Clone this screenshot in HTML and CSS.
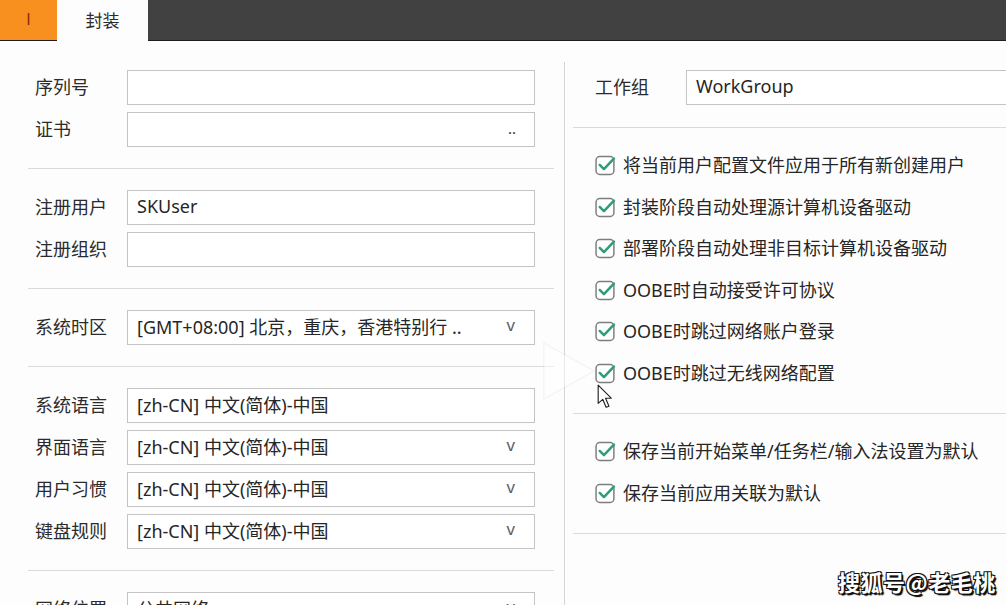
FILE: index.html
```html
<!DOCTYPE html>
<html lang="zh-CN">
<head>
<meta charset="utf-8">
<title>封装</title>
<link rel="stylesheet" href="styles.css">
</head>
<body>
<div class="topbar">
  <div class="tab tab-orange"><span class="tab-i">I</span></div>
  <div class="tab tab-active">封装</div>
</div>
<div class="main">
  <div class="col col-left">
    <div class="section first">
      <div class="row"><span class="label">序列号</span><div class="input"></div></div>
      <div class="row"><span class="label">证书</span><div class="input"><span class="fill"></span><span class="dots">..</span></div></div>
    </div>
    <div class="section">
      <div class="row"><span class="label">注册用户</span><div class="input">SKUser</div></div>
      <div class="row"><span class="label">注册组织</span><div class="input"></div></div>
    </div>
    <div class="section">
      <div class="row"><span class="label">系统时区</span><div class="input"><span class="fill">[GMT+08:00] 北京，重庆，香港特别行 ..</span><span class="arrow">v</span></div></div>
    </div>
    <div class="section">
      <div class="row"><span class="label">系统语言</span><div class="input">[zh-CN] 中文(简体)-中国</div></div>
      <div class="row"><span class="label">界面语言</span><div class="input"><span class="fill">[zh-CN] 中文(简体)-中国</span><span class="arrow">v</span></div></div>
      <div class="row"><span class="label">用户习惯</span><div class="input"><span class="fill">[zh-CN] 中文(简体)-中国</span><span class="arrow">v</span></div></div>
      <div class="row"><span class="label">键盘规则</span><div class="input"><span class="fill">[zh-CN] 中文(简体)-中国</span><span class="arrow">v</span></div></div>
    </div>
    <div class="section">
      <div class="row"><span class="label">网络位置</span><div class="input"><span class="fill">公共网络</span><span class="arrow">v</span></div></div>
    </div>
  </div>
  <div class="col col-right">
    <div class="section first">
      <div class="row"><span class="label label-r">工作组</span><div class="input input-wide">WorkGroup</div></div>
    </div>
    <div class="section checks">
      <div class="check"><svg class="cb" viewBox="0 0 20 20"><rect x="1" y="1.5" width="17" height="17" rx="3.5"/><path d="M4.5 9.5 L8.5 13.5 L18 3.5"/></svg><span>将当前用户配置文件应用于所有新创建用户</span></div>
      <div class="check"><svg class="cb" viewBox="0 0 20 20"><rect x="1" y="1.5" width="17" height="17" rx="3.5"/><path d="M4.5 9.5 L8.5 13.5 L18 3.5"/></svg><span>封装阶段自动处理源计算机设备驱动</span></div>
      <div class="check"><svg class="cb" viewBox="0 0 20 20"><rect x="1" y="1.5" width="17" height="17" rx="3.5"/><path d="M4.5 9.5 L8.5 13.5 L18 3.5"/></svg><span>部署阶段自动处理非目标计算机设备驱动</span></div>
      <div class="check"><svg class="cb" viewBox="0 0 20 20"><rect x="1" y="1.5" width="17" height="17" rx="3.5"/><path d="M4.5 9.5 L8.5 13.5 L18 3.5"/></svg><span>OOBE时自动接受许可协议</span></div>
      <div class="check"><svg class="cb" viewBox="0 0 20 20"><rect x="1" y="1.5" width="17" height="17" rx="3.5"/><path d="M4.5 9.5 L8.5 13.5 L18 3.5"/></svg><span>OOBE时跳过网络账户登录</span></div>
      <div class="check"><svg class="cb" viewBox="0 0 20 20"><rect x="1" y="1.5" width="17" height="17" rx="3.5"/><path d="M4.5 9.5 L8.5 13.5 L18 3.5"/></svg><span>OOBE时跳过无线网络配置</span></div>
    </div>
    <div class="section checks">
      <div class="check"><svg class="cb" viewBox="0 0 20 20"><rect x="1" y="1.5" width="17" height="17" rx="3.5"/><path d="M4.5 9.5 L8.5 13.5 L18 3.5"/></svg><span>保存当前开始菜单/任务栏/输入法设置为默认</span></div>
      <div class="check"><svg class="cb" viewBox="0 0 20 20"><rect x="1" y="1.5" width="17" height="17" rx="3.5"/><path d="M4.5 9.5 L8.5 13.5 L18 3.5"/></svg><span>保存当前应用关联为默认</span></div>
    </div>
  </div>
</div>
<svg class="play" viewBox="0 0 60 64"><polygon points="4,2 58,32 4,62"/></svg>
<svg class="cursor" viewBox="0 0 14 22"><path d="M1 1 L1 17 L5 13.5 L8 20.5 L10.5 19.5 L7.5 12.5 L12.5 12.5 Z"/></svg>
<div class="watermark">搜狐号@老毛桃</div>
</body>
</html>
```

FILE: styles.css
```css
html, body {
  margin: 0;
  padding: 0;
  width: 1006px;
  height: 605px;
  overflow: hidden;
  background: #fdfdfd;
  font-family: "Noto Sans", "Noto Sans CJK SC", sans-serif;
  font-size: 18px;
  color: #262626;
}

.topbar {
  display: flex;
  height: 40px;
  background: #414141;
  border-bottom: 1px solid #1e1e1e;
}

.tab {
  height: 40px;
  display: flex;
  align-items: center;
  justify-content: center;
}

.tab-orange {
  width: 57px;
  background: #f8901f;
}

.tab-i {
  color: #8e2e10;
  font-family: "Liberation Sans", sans-serif;
  font-size: 16px;
}

.tab-active {
  width: 91px;
  height: 41px;
  padding-bottom: 2px;
  box-sizing: border-box;
  background: #fdfdfd;
  font-family: "Noto Sans CJK SC", sans-serif;
  font-size: 17px;
  color: #2b2b2b;
  margin-bottom: -1px;
}

.main {
  display: flex;
  width: 1006px;
  overflow: hidden;
}

.col {
  margin-top: 21px;
}

.col-left {
  flex: none;
  width: 565px;
  box-sizing: border-box;
  padding: 0 10px 0 28px;
  border-right: 1px solid #d6d6d6;
}

.col-right {
  flex: 1;
  min-width: 0;
  padding-left: 8px;
  overflow: hidden;
}

.section {
  display: flex;
  flex-direction: column;
  gap: 7px;
  padding: 21px 0;
  border-bottom: 1px solid #dadada;
}

.section.first {
  padding-top: 8px;
}

.col-right .section.first {
  padding-bottom: 22px;
}

.row {
  display: flex;
  align-items: center;
  height: 35px;
  padding-left: 7px;
}

.label {
  width: 92px;
  flex: none;
  padding-bottom: 3px;
  font-family: "Noto Sans CJK SC", sans-serif;
  color: #2b2b2b;
}

.label-r {
  width: 91px;
  padding-left: 15px;
}

.input {
  width: 408px;
  height: 35px;
  box-sizing: border-box;
  border: 1px solid #c4c4c4;
  background: #fff;
  display: flex;
  align-items: center;
  padding: 0 18px 3px 9px;
  white-space: nowrap;
  color: #262626;
  flex: none;
}

.input-wide {
  width: 420px;
}

.fill {
  flex: 1;
}

.dots {
  font-size: 15px;
  color: #333;
  margin-right: 0;
}

.arrow {
  font-family: "Liberation Sans", sans-serif;
  font-size: 17px;
  color: #5e5e5e;
  margin-right: 1px;
}

.checks {
  gap: 0;
  padding: 17px 0 19px;
}

.check {
  display: flex;
  align-items: center;
  height: 41.5px;
  padding-left: 22px;
  color: #262626;
}

.check span {
  padding-bottom: 3px;
}

.cb {
  width: 21px;
  height: 21px;
  margin-right: 7px;
  flex: none;
}

.cb rect {
  fill: #fff;
  stroke: #7e7e7e;
  stroke-width: 1.4;
}

.cb path {
  fill: none;
  stroke: #2f9d79;
  stroke-width: 2.4;
  stroke-linecap: round;
  stroke-linejoin: round;
}

.play {
  position: absolute;
  left: 540px;
  top: 340px;
  width: 56px;
  height: 62px;
}

.play polygon {
  fill: rgba(255, 255, 255, 0.45);
  stroke: rgba(0, 0, 0, 0.03);
  stroke-width: 2;
}

.cursor {
  position: absolute;
  left: 597px;
  top: 384px;
  width: 16px;
  height: 25px;
}

.cursor path {
  fill: #fff;
  stroke: #222;
  stroke-width: 1;
  stroke-linejoin: round;
}

.watermark {
  position: absolute;
  left: 838px;
  top: 565px;
  font-family: "Noto Sans CJK SC", sans-serif;
  font-size: 22px;
  font-weight: bold;
  color: #fff;
  letter-spacing: 0.5px;
  text-shadow: 1px 1px 0 #111, -1px -1px 0 #111, 1px -1px 0 #111, -1px 1px 0 #111, 2px 2px 1px #000;
}
```
